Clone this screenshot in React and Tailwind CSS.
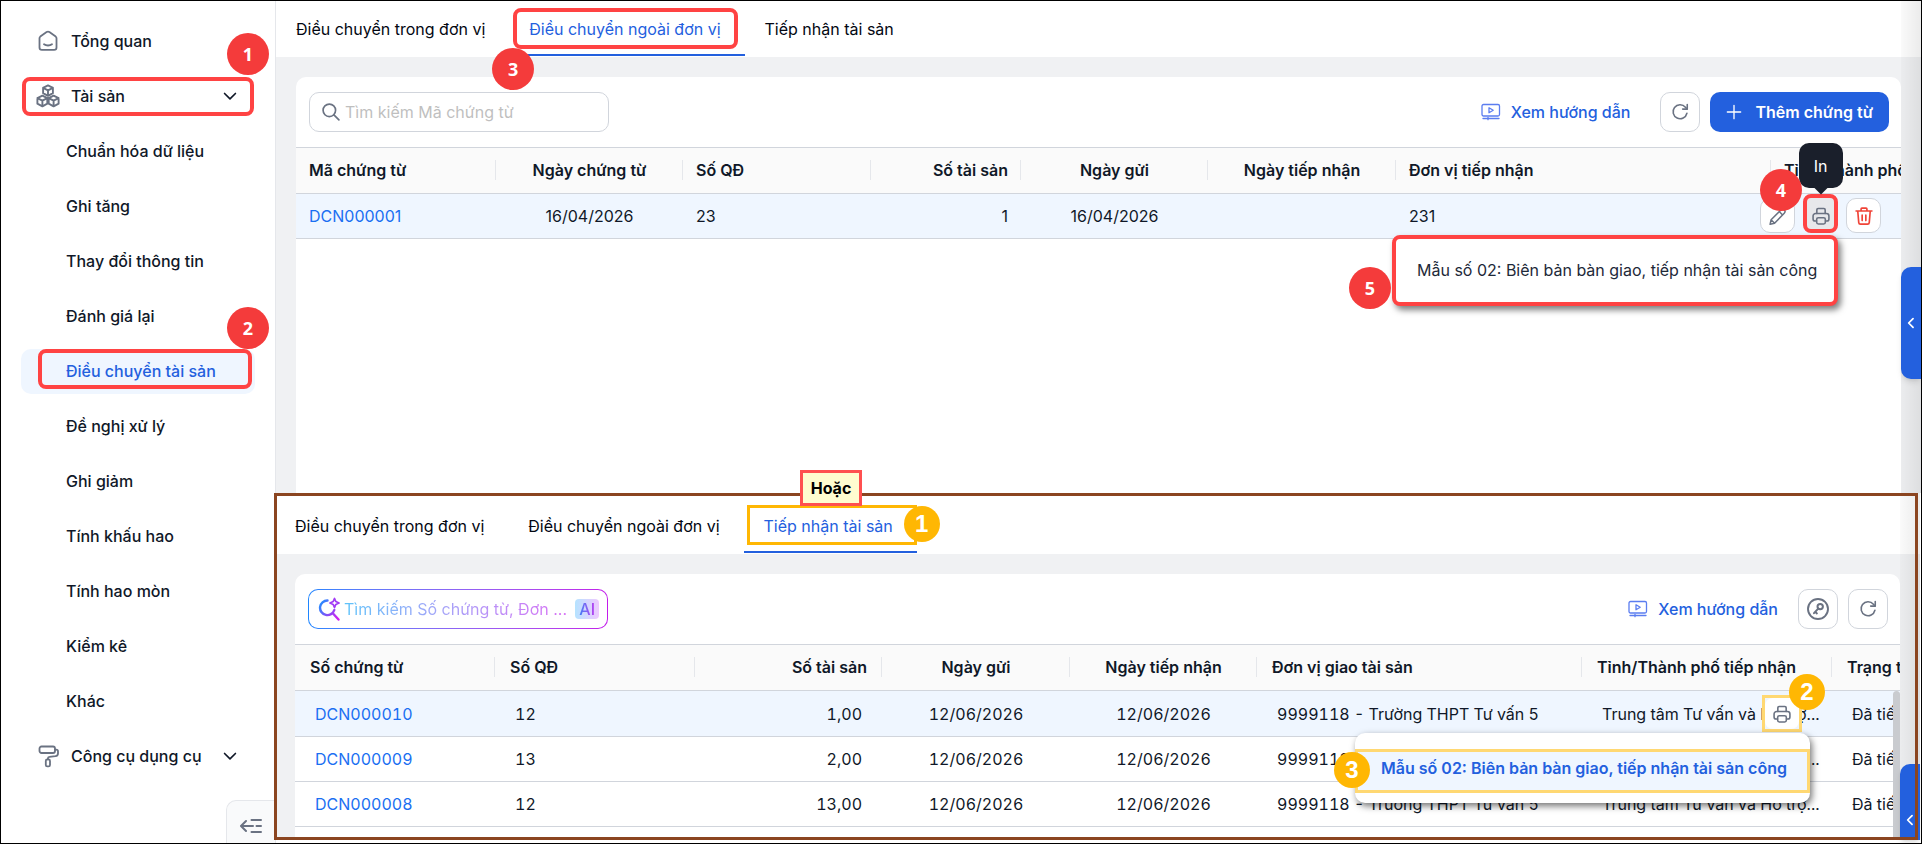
import React, { useState } from 'react';

/* ------------------------------------------------------------------ */
//  1. DATA
/* ------------------------------------------------------------------ */
const assetItems = [
  'Chuẩn hóa dữ liệu',
  'Ghi tăng',
  'Thay đổi thông tin',
  'Đánh giá lại',
  'Điều chuyển tài sản',
  'Đề nghị xử lý',
  'Ghi giảm',
  'Tính khấu hao',
  'Tính hao mòn',
  'Kiểm kê',
  'Khác',
];

const tabs = ['Điều chuyển trong đơn vị', 'Điều chuyển ngoài đơn vị', 'Tiếp nhận tài sản'];

const transferColumns = [
  { label: 'Mã chứng từ', align: 'text-left', width: 'w-[200px]' },
  { label: 'Ngày chứng từ', align: 'text-center', width: 'w-[187px]' },
  { label: 'Số QĐ', align: 'text-left', width: 'w-[188px]' },
  { label: 'Số tài sản', align: 'text-right', width: 'w-[150px]' },
  { label: 'Ngày gửi', align: 'text-center', width: 'w-[187px]' },
  { label: 'Ngày tiếp nhận', align: 'text-center', width: 'w-[188px]' },
  { label: 'Đơn vị tiếp nhận', align: 'text-left', width: 'w-[375px]' },
  { label: 'Tỉnh/Thành phố tiếp nhận', align: 'text-left', width: '' },
];

const receiveColumns = [
  { label: 'Số chứng từ', align: 'text-left', width: 'w-[200px]' },
  { label: 'Số QĐ', align: 'text-left', width: 'w-[200px]' },
  { label: 'Số tài sản', align: 'text-right', width: 'w-[187px]' },
  { label: 'Ngày gửi', align: 'text-center', width: 'w-[188px]' },
  { label: 'Ngày tiếp nhận', align: 'text-center', width: 'w-[187px]' },
  { label: 'Đơn vị giao tài sản', align: 'text-left', width: 'w-[325px]' },
  { label: 'Tỉnh/Thành phố tiếp nhận', align: 'text-left', width: 'w-[250px]' },
  { label: 'Trạng thái', align: 'text-left', width: '' },
];

const receiveRows = [
  { code: 'DCN000010', decision: '12', count: '1,00' },
  { code: 'DCN000009', decision: '13', count: '2,00' },
  { code: 'DCN000008', decision: '12', count: '13,00' },
];

/* ------------------------------------------------------------------ */
//  2. ICONS
/* ------------------------------------------------------------------ */
const Svg = ({ size = 20, stroke = 1.5, className = '', children }) => (
  <svg width={size} height={size} viewBox="0 0 24 24" fill="none" stroke="currentColor" strokeWidth={stroke} strokeLinecap="round" strokeLinejoin="round" className={`shrink-0 ${className}`} aria-hidden="true">
    {children}
  </svg>
);

const HomeIcon = () => (
  <Svg size={24} stroke={1.8} className="text-gray-500">
    <path d="M3.5 9.2v9.3a2.4 2.4 0 0 0 2.4 2.4h12.2a2.4 2.4 0 0 0 2.4-2.4V9.2a2 2 0 0 0-.8-1.6l-6.3-4.5a2.4 2.4 0 0 0-2.8 0L4.3 7.6a2 2 0 0 0-.8 1.6Z" />
    <path d="M8 15.2c1.2.9 2.5 1.3 4 1.3s2.8-.4 4-1.3" />
  </Svg>
);

const CubesIcon = () => (
  <Svg size={24} stroke={1.9} className="text-gray-500">
    <path d="M12 1.4 16.9 3.8v5.4L12 11.8 7.1 9.2V3.8Z M7.1 3.8 12 6.3l4.9-2.5 M12 6.3v5.5" />
    <path d="M6.4 11.6l4.9 2.5v5.6l-4.9 2.7-5-2.7v-5.6Z M1.4 14.1l5 2.6 4.9-2.6 M6.4 16.7v5.7" />
    <path d="M17.6 11.6l5 2.5v5.6l-5 2.7-4.9-2.7v-5.6Z M12.7 14.1l4.9 2.6 5-2.6 M17.6 16.7v5.7" />
  </Svg>
);

const RollerIcon = () => (
  <Svg size={24} stroke={1.8} className="text-gray-500">
    <rect x="3.5" y="2.5" width="15.5" height="6.5" rx="2" />
    <path d="M19 5.7h1.3a1.7 1.7 0 0 1 1.7 1.7v1.8a3 3 0 0 1-2.6 3l-6 .6a1.6 1.6 0 0 0-1.5 1.6v1" />
    <rect x="9.8" y="15.4" width="4.2" height="7" rx="1.5" />
  </Svg>
);

const ChevronIcon = () => (
  <Svg size={20} stroke={2} className="text-gray-900"><path d="M5.5 9l6.5 6.5L18.5 9" /></Svg>
);

const CollapseIcon = () => (
  <Svg size={24} stroke={2} className="text-gray-500">
    <path d="M14 12H2.5 M7 7l-5 5 5 5 M12.5 6H22 M17.5 12H22 M12.5 18H22" />
  </Svg>
);

const SearchIcon = () => (
  <Svg size={20} stroke={2} className="text-gray-500"><circle cx="10" cy="10" r="7.5" /><path d="M15.5 15.5 21.5 21.5" /></Svg>
);

const AiSearchIcon = () => (
  <svg width="24" height="24" viewBox="0 0 24 24" fill="none" className="shrink-0" aria-hidden="true">
    <defs>
      <linearGradient id="ai-stroke" x1="2" y1="6" x2="22" y2="20" gradientUnits="userSpaceOnUse">
        <stop stopColor="#1e90ff" />
        <stop offset="1" stopColor="#d41ef0" />
      </linearGradient>
    </defs>
    <path d="M10.5 3.5a7.3 7.3 0 1 0 6.8 9.5 M16 16.5l5.5 6" stroke="url(#ai-stroke)" strokeWidth="2.4" strokeLinecap="round" />
    <path d="M17.5 1.5l1.3 3 3.2 1.5-3.2 1.5-1.3 3-1.3-3L13 6l3.2-1.5Z" stroke="#a23bf5" strokeWidth="1.8" strokeLinejoin="round" />
  </svg>
);

const GuideIcon = () => (
  <svg width="20" height="18" viewBox="0 0 20 18" fill="none" className="shrink-0" stroke="#5b7df0" strokeWidth="1.3" strokeLinecap="round" strokeLinejoin="round" aria-hidden="true">
    <rect x="1" y="1.5" width="17.5" height="11.5" rx="1.5" />
    <path d="M8 4.8v5l4.2-2.5Z M2 15.5h16 M7 14.3v2.4" />
  </svg>
);

const RefreshIcon = () => (
  <Svg size={20} stroke={1.9} className="text-gray-500">
    <path d="M20.3 13.5a8.4 8.4 0 1 1-1.8-7.3l2 2.3" />
    <path d="M20.7 3v5.5h-5.5" />
  </Svg>
);

const PlusIcon = () => (
  <Svg size={16} stroke={2}><path d="M12 2v20 M2 12h20" /></Svg>
);

const KeyIcon = () => (
  <Svg size={24} stroke={1.9} className="text-gray-500">
    <circle cx="12" cy="12" r="10" />
    <circle cx="14.2" cy="9.6" r="2.7" strokeWidth="2" />
    <path d="M12.2 11.6 8 16.2 M9.2 14.8l1.7 1.6" strokeWidth="2" />
  </Svg>
);

const EditIcon = () => (
  <Svg size={20} stroke={1.8} className="text-gray-500">
    <path d="M2.5 22l1.2-5.5L15.5 4.700a2.800 2.800 0 0 1 4 4L7.900 20.600Z M13.500 6.700l4 4 M3.700 16.500l4.200 4.100" />
  </Svg>
);

const PrintIcon = () => (
  <Svg size={20} stroke={1.9} className="text-gray-500">
    <path d="M7 9V4.5A1.5 1.5 0 0 1 8.5 3h7A1.5 1.5 0 0 1 17 4.5V9" />
    <path d="M6.5 18H5a2.5 2.5 0 0 1-2.5-2.5V12A3 3 0 0 1 5.5 9h13a3 3 0 0 1 3 3v3.5A2.5 2.5 0 0 1 19 18h-1.5" />
    <rect x="6.8" y="14" width="10.4" height="7.5" rx="2" />
  </Svg>
);

const TrashIcon = () => (
  <Svg size={20} stroke={2} className="text-[#f04438]">
    <path d="M2.5 6h19 M8.5 6V3.5a1 1 0 0 1 1-1h5a1 1 0 0 1 1 1V6 M4.5 6l1.2 14a2 2 0 0 0 2 1.8h8.6a2 2 0 0 0 2-1.8L19.5 6 M9.8 11v6.5 M14.2 11v6.5" />
  </Svg>
);

/* ------------------------------------------------------------------ */
//  3. SHARED PARTS
/* ------------------------------------------------------------------ */
const RedStep = ({ n, className }) => (
  <span className={`absolute z-30 flex size-[42px] items-center justify-center rounded-full bg-[#f43b3b] font-['Open_Sans',sans-serif] text-lg font-bold text-white ${className}`}>{n}</span>
);

const YellowStep = ({ n, className }) => (
  <span className={`absolute z-30 flex size-9 items-center justify-center rounded-full bg-[#ffb703] font-['Liberation_Sans',sans-serif] text-2xl font-bold text-white ${className}`}>{n}</span>
);

const TabBar = ({ active, onSelect, mark }) => (
  <nav className="flex h-14 bg-white">
    {tabs.map((tab, i) => (
      <button key={tab} type="button" onClick={() => onSelect(i)} className={`relative pr-6 pl-5 ${active === i ? 'text-[#2360de]' : 'text-gray-950'}`}>
        {tab}
        {active === i && <span className="absolute inset-x-0 bottom-px h-0.5 bg-[#2360de]" />}
        {active === i && mark}
      </button>
    ))}
  </nav>
);

const GuideLink = () => (
  <a href="#huong-dan" className="flex items-center gap-2.5 pb-px font-medium text-[#2360de]"><GuideIcon />Xem hướng dẫn</a>
);

const SquareButton = ({ label, children }) => (
  <button type="button" aria-label={label} className="flex size-10 items-center justify-center rounded-[10px] border border-gray-300 bg-white">{children}</button>
);

const TableHead = ({ columns, pad }) => (
  <thead>
    <tr>
      {columns.map((c, i) => (
        <th key={c.label} scope="col" className={`relative h-[47px] border-y border-gray-300 bg-[#fafafa] pb-0.5 font-semibold whitespace-nowrap ${pad} ${c.align} ${c.width}`}>
          {c.label}
          {i < columns.length - 1 && <span className="absolute top-3 right-0 h-5 w-px bg-gray-200" />}
        </th>
      ))}
    </tr>
  </thead>
);

const SidePull = ({ className }) => (
  <button type="button" aria-label="Mở bảng bên" className={`absolute z-10 flex w-5 items-center justify-center bg-[#2360de] text-white shadow-md ${className}`}>
    <Svg size={14} stroke={3}><path d="M15.5 4.5 8 12l7.5 7.5" /></Svg>
  </button>
);

/* ------------------------------------------------------------------ */
//  4. SIDEBAR
/* ------------------------------------------------------------------ */
const Sidebar = () => (
  <aside className="relative flex w-[275px] shrink-0 flex-col gap-2.5 border-r border-gray-200 bg-white px-5 pt-[18px] font-medium">
    <a href="#tong-quan" className="flex h-[45px] items-center gap-[11px] pb-0.5 pl-[15px]"><HomeIcon />Tổng quan</a>

    <button type="button" className="relative flex h-[45px] items-center gap-[11px] pr-[15px] pb-0.5 pl-[15px]">
      <CubesIcon />
      <span className="flex-1 text-left">Tài sản</span>
      <ChevronIcon />
      <span className="absolute inset-x-px inset-y-[3px] rounded-lg border-4 border-[#ff4343]" />
      <RedStep n={1} className="-top-[41px] -right-3.5" />
    </button>

    {assetItems.map((item) => (
      item === 'Điều chuyển tài sản' ? (
        <a key={item} href="#dieu-chuyen" className="relative flex h-[45px] items-center rounded-[10px] bg-[#eff6ff] pb-0.5 pl-[45px] text-[#2360de]">
          {item}
          <span className="absolute top-0 right-[3px] bottom-[5px] left-[17px] rounded-lg border-4 border-[#ff4343]" />
          <RedStep n={2} className="-top-[42px] -right-3.5" />
        </a>
      ) : (
        <a key={item} href="#tai-san" className="flex h-[45px] items-center pb-0.5 pl-[45px]">{item}</a>
      )
    ))}

    <button type="button" className="flex h-[45px] items-center gap-[11px] pr-[15px] pb-0.5 pl-[15px]">
      <RollerIcon />
      <span className="flex-1 text-left">Công cụ dụng cụ</span>
      <ChevronIcon />
    </button>

    <button type="button" aria-label="Thu gọn" className="absolute right-0 bottom-0 flex h-[43px] w-[49px] items-center justify-center rounded-tl-[10px] border-t border-l border-gray-200 bg-gray-50 pt-2">
      <CollapseIcon />
    </button>
  </aside>
);

/* ------------------------------------------------------------------ */
//  5. TRANSFER (OUTSIDE THE UNIT)
/* ------------------------------------------------------------------ */
const TransferSection = () => {
  const [tab, setTab] = useState(1);
  const td = 'h-[45px] border-b border-gray-300 px-[13px] whitespace-nowrap';

  return (
    <section className="relative flex flex-1 flex-col bg-[#f0f1f3]">
      <TabBar
        active={tab}
        onSelect={setTab}
        mark={(
          <>
            <span className="absolute top-[7px] right-[7px] bottom-2 left-1 rounded-lg border-4 border-[#ff4343]" />
            <RedStep n={3} className="top-[47px] -left-[17px]" />
          </>
        )}
      />
      <div className="mx-5 mt-5 flex-1 rounded-t-[10px] bg-white">
        <div className="flex items-center py-[15px] pr-3 pl-[13px]">
          <label className="flex h-10 w-[300px] items-center gap-1 rounded-[10px] border border-gray-300 px-[11px]">
            <SearchIcon />
            <input type="text" aria-label="Tìm kiếm" placeholder="Tìm kiếm Mã chứng từ" className="min-w-0 flex-1 outline-none placeholder:text-[#bfbfbf]" />
          </label>
          <div className="ml-auto flex items-center gap-2.5">
            <div className="mr-5"><GuideLink /></div>
            <SquareButton label="Tải lại"><RefreshIcon /></SquareButton>
            <button type="button" className="flex h-10 items-center gap-[13px] rounded-[10px] bg-[#2360de] px-4 pb-px font-semibold text-white"><PlusIcon />Thêm chứng từ</button>
          </div>
        </div>

        <div className="relative">
          <div className="overflow-hidden">
            <table className="w-full table-fixed border-separate border-spacing-0">
              <TableHead columns={transferColumns} pad="px-[13px]" />
              <tbody className="bg-[#eff6ff]">
                <tr>
                  <td className={td}><a href="#DCN000001" className="text-[#1a6ff2]">DCN000001</a></td>
                  <td className={`${td} text-center`}>16/04/2026</td>
                  <td className={td}>23</td>
                  <td className={`${td} text-right`}>1</td>
                  <td className={`${td} text-center`}>16/04/2026</td>
                  <td className={td} />
                  <td className={td}>231</td>
                  <td className={td} />
                </tr>
              </tbody>
            </table>
          </div>

          {/* row actions float over the last cells */}
          <div className="absolute top-[51px] right-5 flex gap-2">
            <button type="button" aria-label="Sửa" className="relative flex size-[35px] items-center justify-center rounded-[10px] border border-gray-300 bg-white">
              <EditIcon />
              <RedStep n={4} className="-top-[30px] -left-px" />
            </button>
            <button type="button" aria-label="In" className="relative flex size-[35px] items-center justify-center rounded-lg bg-[#e7e8eb]">
              <PrintIcon />
              <span className="absolute inset-x-0 -top-1 bottom-0 rounded-lg border-4 border-[#ff4343]" />
              <span role="tooltip" className="absolute -top-[55px] left-1/2 z-20 flex h-[45px] w-11 -translate-x-1/2 items-center justify-center rounded-[10px] bg-[#1a1f2b] text-white">
                In
                <span className="absolute -bottom-1 size-3 rotate-45 bg-[#1a1f2b]" />
              </span>
            </button>
            <button type="button" aria-label="Xóa" className="flex size-[35px] items-center justify-center rounded-[10px] border border-gray-300 bg-white"><TrashIcon /></button>
          </div>
          <div role="menu" className="absolute top-[88px] right-[63px] z-10 flex h-[71px] w-[446px] items-center rounded-lg border-4 border-[#ff4343] bg-white pb-0.5 pl-[21px] text-gray-800 shadow-[3px_4px_6px_rgba(0,0,0,0.5)]">
            <button type="button" role="menuitem" className="whitespace-nowrap">Mẫu số 02: Biên bản bàn giao, tiếp nhận tài sản công</button>
            <RedStep n={5} className="top-7 -left-[47px]" />
          </div>
        </div>
      </div>
      <div className="absolute inset-y-0 right-0 w-5 bg-gradient-to-r from-black/2 to-black/8" />
      <SidePull className="top-[266px] right-0 h-28 rounded-l-[10px]" />
    </section>
  );
};

/* ------------------------------------------------------------------ */
//  6. RECEIVE
/* ------------------------------------------------------------------ */
const ReceiveSection = () => {
  const [tab, setTab] = useState(2);
  const td = 'border-b border-gray-300 px-5 whitespace-nowrap overflow-hidden';

  return (
    <section className="relative z-20 mr-px -ml-px mb-[3px] bg-[#f0f1f3]">
      <div className="bg-white pt-[5px]">
        <TabBar
          active={tab}
          onSelect={setTab}
          mark={(
            <>
              <span className="absolute top-[7px] right-0 left-[3px] h-10 border-3 border-[#ffb703]" />
              <YellowStep n={1} className="top-2 -right-[23px]" />
            </>
          )}
        />
      </div>
      <div className="relative mx-5 mt-5 rounded-t-[10px] bg-white pb-[13px]">
        <div className="flex items-center py-[15px] pr-3 pl-[13px]">
          <div className="h-10 w-[300px] rounded-[10px] bg-gradient-to-r from-[#1e86ff] to-[#c31bea] p-px">
            <label className="flex h-full items-center gap-[3px] rounded-[9px] bg-white px-2">
              <AiSearchIcon />
              <input type="text" aria-label="Tìm kiếm AI" placeholder="Tìm kiếm Số chứng từ, Đơn ..." className="min-w-0 flex-1 outline-none placeholder:bg-gradient-to-r placeholder:from-[#5cc3fa] placeholder:to-[#d86df5] placeholder:bg-clip-text placeholder:text-transparent" />
              <span className="flex h-5 items-center rounded bg-gradient-to-r from-[#b5e3ff] to-[#eec8ff] px-1 font-medium">
                <span className="bg-gradient-to-r from-[#2f7cf6] to-[#b32df0] bg-clip-text text-transparent">AI</span>
              </span>
            </label>
          </div>
          <div className="ml-auto flex items-center gap-2.5">
            <div className="mr-2.5"><GuideLink /></div>
            <SquareButton label="Phân quyền"><KeyIcon /></SquareButton>
            <SquareButton label="Tải lại"><RefreshIcon /></SquareButton>
          </div>
        </div>

        <div className="relative">
          <div className="overflow-hidden">
            <table className="w-full table-fixed border-separate border-spacing-0">
              <TableHead columns={receiveColumns} pad="px-[15px]" />
              <tbody className="tabular-nums">
                {receiveRows.map((row, i) => (
                  <tr key={row.code} className={i === 0 ? 'h-[46px] bg-[#eff6ff]' : 'h-[45px] bg-white'}>
                    <td className={td}><a href={`#${row.code}`} className="text-[#1a6ff2]">{row.code}</a></td>
                    <td className={td}>{row.decision}</td>
                    <td className={`${td} text-right`}>{row.count}</td>
                    <td className={`${td} text-center`}>12/06/2026</td>
                    <td className={`${td} text-center`}>12/06/2026</td>
                    <td className={td}>9999118 - Trường THPT Tư vấn 5</td>
                    <td className="border-b border-gray-300 pl-5 whitespace-nowrap">Trung tâm Tư vấn và Hỗ trợ...</td>
                    <td className={td}>Đã tiếp nhận</td>
                  </tr>
                ))}
              </tbody>
            </table>
          </div>

          <div className="absolute top-[51px] right-[98px] flex h-[37px] w-10 items-center justify-center border-3 border-[#ffd872]">
            <button type="button" aria-label="In" className="flex size-full items-center justify-center rounded-lg bg-white"><PrintIcon /></button>
            <YellowStep n={2} className="-top-6 -right-[26px]" />
          </div>
          <div role="menu" className="absolute top-[89px] right-[90px] z-10 w-[455px] rounded-[10px] bg-white pt-4 pb-2.5 shadow-[2px_3px_7px_rgba(0,0,0,0.55)]">
            <button type="button" role="menuitem" className="block h-11 w-full border-3 border-[#ffd872] bg-[#eff6ff] pb-1.5 pl-[23px] text-left font-semibold whitespace-nowrap text-[#2360de]">
              Mẫu số 02: Biên bản bàn giao, tiếp nhận tài sản công
            </button>
            <YellowStep n={3} className="top-[19px] -left-[21px]" />
          </div>
        </div>
        <div className="absolute right-0 bottom-0 h-[149px] w-[7px] rounded-t bg-[#c9cbcf]" />
      </div>
      <div className="absolute inset-y-0 right-0 w-5 bg-gradient-to-r from-black/2 to-black/8" />
      <SidePull className="right-0 bottom-0 h-[76px] rounded-tl-[10px] pt-9" />
      <div className="pointer-events-none absolute inset-y-0 right-0.5 -left-px z-20 border-3 border-[#8b4520]" />
      <span className="absolute -top-[23px] left-[525px] z-30 flex h-9 w-[62px] items-center justify-center border-3 border-[#ff5050] bg-[#fffccf] font-bold text-black">Hoặc</span>
    </section>
  );
};

/* ------------------------------------------------------------------ */
//  7. MAIN APP CONTAINER
/* ------------------------------------------------------------------ */
export default function App() {
  return (
    <div className="flex min-h-screen border border-black bg-white font-[Inter,sans-serif] text-base text-gray-900">
      <Sidebar />
      <main className="flex min-w-0 flex-1 flex-col">
        <TransferSection />
        <ReceiveSection />
      </main>
    </div>
  );
}
